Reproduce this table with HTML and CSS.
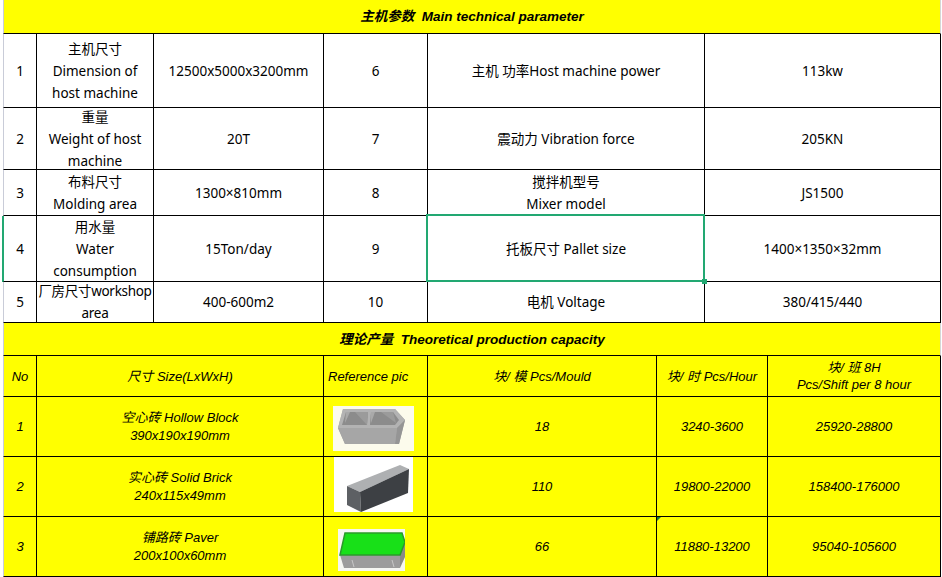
FILE: index.html
```html
<!DOCTYPE html>
<html>
<head>
<meta charset="utf-8">
<link rel="stylesheet" href="styles.css">
</head>
<body>
<div class="sheet">
  <div class="grid spec">
    <div class="cell title first"><span>主机参数&nbsp; Main technical parameter</span></div>

    <div class="cell first">1</div>
    <div class="cell">主机尺寸<br>Dimension of<br>host machine</div>
    <div class="cell">12500x5000x3200mm</div>
    <div class="cell">6</div>
    <div class="cell">主机 功率Host machine power</div>
    <div class="cell">113kw</div>

    <div class="cell first">2</div>
    <div class="cell">重量<br>Weight of host<br>machine</div>
    <div class="cell">20T</div>
    <div class="cell">7</div>
    <div class="cell">震动力 Vibration force</div>
    <div class="cell">205KN</div>

    <div class="cell first">3</div>
    <div class="cell">布料尺寸<br>Molding area</div>
    <div class="cell">1300×810mm</div>
    <div class="cell">8</div>
    <div class="cell">搅拌机型号<br>Mixer model</div>
    <div class="cell">JS1500</div>

    <div class="cell first rowsel">4</div>
    <div class="cell">用水量<br>Water<br>consumption</div>
    <div class="cell">15Ton/day</div>
    <div class="cell">9</div>
    <div class="cell sel">托板尺寸 Pallet size</div>
    <div class="cell">1400×1350×32mm</div>

    <div class="cell first">5</div>
    <div class="cell tight">厂房尺寸workshop<br>area</div>
    <div class="cell">400-600m2</div>
    <div class="cell">10</div>
    <div class="cell">电机 Voltage</div>
    <div class="cell">380/415/440</div>
  </div>

  <div class="grid cap">
    <div class="cell title first"><span>理论产量&nbsp; Theoretical production capacity</span></div>

    <div class="cell first">No</div>
    <div class="cell">尺寸 Size(LxWxH)</div>
    <div class="cell left">Reference pic</div>
    <div class="cell">块/ 模 Pcs/Mould</div>
    <div class="cell">块/ 时 Pcs/Hour</div>
    <div class="cell">块/ 班 8H<br>Pcs/Shift per 8 hour</div>

    <div class="cell first">1</div>
    <div class="cell two">空心砖 Hollow Block<br>390x190x190mm</div>
    <div class="cell pic">
      <svg class="p1" width="81" height="45" viewBox="0 0 81 45">
        <rect width="81" height="45" fill="#fcfbec"/>
        <polygon points="10,3 62,3 72,14 66,38 12,38 5,22" fill="#a2a2a2"/>
        <polygon points="10,3 62,3 72,14 64,22 5,22" fill="#b3b3b3"/>
        <polygon points="13,6 35,6 34,19 9,19" fill="#8c8c8c"/>
        <polygon points="13,6 17,6 12,17" fill="#a9a9a9"/>
        <polygon points="22,6 35,6 34,19" fill="#9b9b9b"/>
        <polygon points="38,6 60,6 66,14 62,19 37,19" fill="#8c8c8c"/>
        <polygon points="38,6 42,6 38,17" fill="#a9a9a9"/>
        <polygon points="48,6 60,6 63,17" fill="#9b9b9b"/>
        <polygon points="64,22 72,14 66,38 62,38" fill="#959595"/>
        <polygon points="5,22 64,22 62,38 12,38" fill="#a6a6a6"/>
      </svg>
    </div>
    <div class="cell">18</div>
    <div class="cell">3240-3600</div>
    <div class="cell">25920-28800</div>

    <div class="cell first">2</div>
    <div class="cell two">实心砖 Solid Brick<br>240x115x49mm</div>
    <div class="cell pic">
      <svg class="p2" width="79" height="55" viewBox="0 0 79 55">
        <rect width="79" height="55" fill="#ffffff"/>
        <polygon points="13,29 66,8 75,12 26,35" fill="#aeb0b2"/>
        <polygon points="13,29 26,35 27,55 13,48" fill="#5d6064"/>
        <polygon points="26,35 75,12 74,36 27,55" fill="#3d4044"/>
      </svg>
    </div>
    <div class="cell">110</div>
    <div class="cell">19800-22000</div>
    <div class="cell">158400-176000</div>

    <div class="cell first">3</div>
    <div class="cell two">铺路砖 Paver<br>200x100x60mm</div>
    <div class="cell pic">
      <svg class="p3" width="67" height="42" viewBox="0 0 67 42">
        <rect width="67" height="42" fill="#f6f7f2"/>
        <polygon points="2,26 62,26 62,39 6,39" fill="#9c9c9c"/>
        <polygon points="62,26 67,13 67,28 62,39" fill="#8a8a8a"/>
        <polygon points="7,4 64,4 67,13 62,26 2,26" fill="#18e018" stroke="#2a9a2a" stroke-width="1.5"/>
        <line x1="14" y1="31" x2="16" y2="38" stroke="#c8c8c8" stroke-width="1"/>
        <line x1="54" y1="31" x2="56" y2="38" stroke="#c8c8c8" stroke-width="1"/>
      </svg>
    </div>
    <div class="cell">66</div>
    <div class="cell flag">11880-13200</div>
    <div class="cell">95040-105600</div>
  </div>
</div>
</body>
</html>
```
FILE: styles.css
```css
html, body {
  margin: 0;
  background: #ffffff;
}

.sheet {
  padding-left: 3px;
  width: 938px;
}

.grid {
  display: grid;
}

.spec {
  grid-template-columns: 34px 117px 170px 104px 277px 236px;
  grid-template-rows: 34px 74px 62px 46px 66px 41px;
  font-family: "Noto Sans", "Noto Sans CJK SC", sans-serif;
  font-size: 13.5px;
  line-height: 22px;
  color: #000;
}

.cap {
  grid-template-columns: 34px 287px 104px 229px 111px 173px;
  grid-template-rows: 33px 41px 60px 60px 60px;
  font-family: "Liberation Sans", "Noto Sans CJK SC", sans-serif;
  font-size: 13px;
  font-style: italic;
  line-height: 17px;
  color: #000;
  background: #ffff00;
}

.cell {
  box-sizing: border-box;
  border-right: 1px solid #000;
  border-bottom: 1px solid #000;
  display: flex;
  align-items: center;
  justify-content: center;
  text-align: center;
  white-space: nowrap;
  overflow: hidden;
  position: relative;
}

.first {
  border-left: 1px solid #c9ccd8;
}

.title {
  grid-column: 1 / -1;
  background: #ffff00;
  font-family: "Liberation Sans", "Noto Sans CJK SC", sans-serif;
  font-size: 13.5px;
  font-weight: bold;
  font-style: italic;
  border-right-color: #d6d6d6;
}

.tight {
  letter-spacing: -0.3px;
}

.cap .two {
  line-height: 18px;
}

.left {
  justify-content: flex-start;
  padding-left: 4px;
}

.pic {
  justify-content: flex-start;
  align-items: flex-start;
}

.p1 { margin: 9px 0 0 9px; display: block; }
.p2 { margin: 0 0 0 10px; display: block; }
.p3 { margin: 12px 0 0 14px; display: block; }

.sel {
  overflow: visible;
  z-index: 2;
}

.sel::after {
  content: "";
  position: absolute;
  left: -2px;
  top: -2px;
  right: -1px;
  bottom: -1px;
  border: 2px solid #22a872;
  pointer-events: none;
}

.sel::before {
  content: "";
  position: absolute;
  right: -3px;
  bottom: -3px;
  width: 5px;
  height: 5px;
  background: #22a872;
  z-index: 3;
}

.rowsel {
  border-left-color: #22a872;
  box-shadow: -1px 0 0 #22a872;
}

.flag::before {
  content: "";
  position: absolute;
  left: 0;
  top: 0;
  border-top: 4px solid #1d7a3a;
  border-right: 4px solid transparent;
}
```
